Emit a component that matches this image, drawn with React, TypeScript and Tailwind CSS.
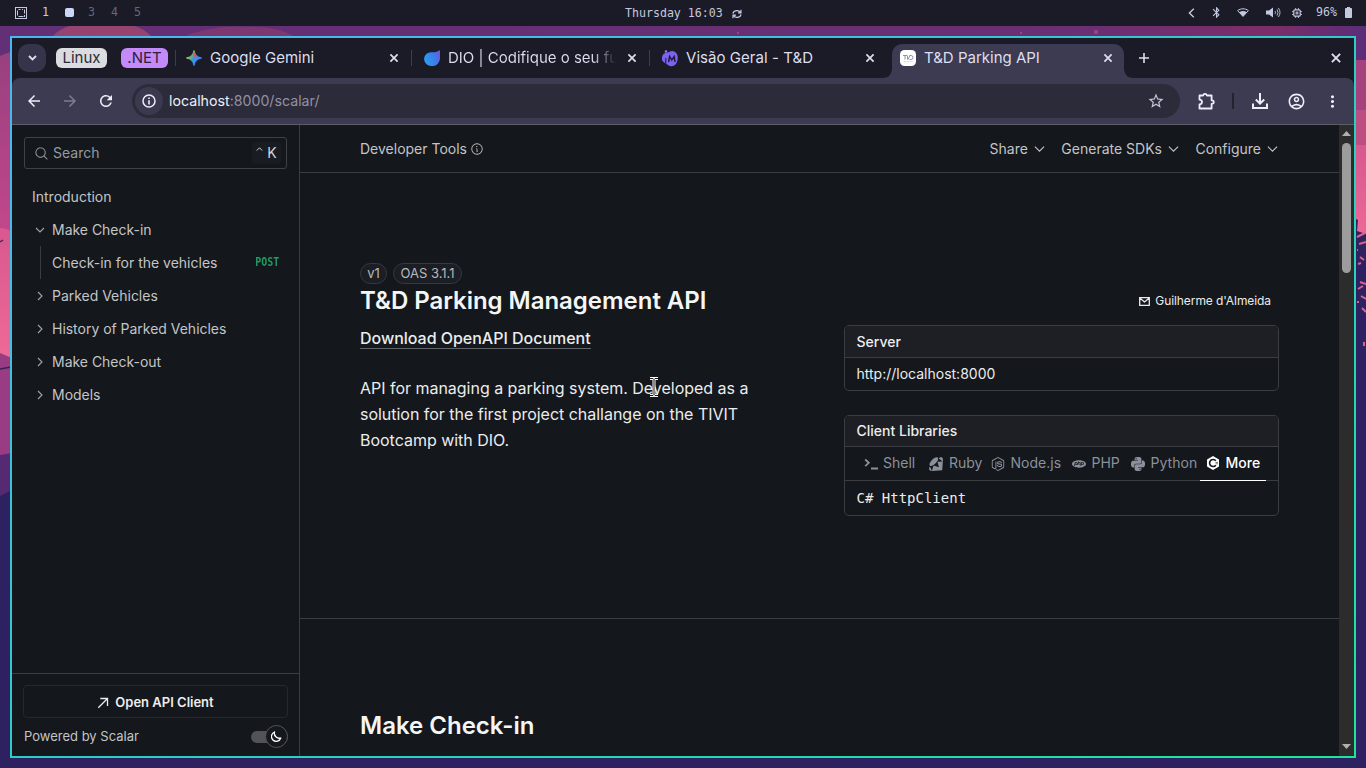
import type { ReactNode } from "react";
import {
  MdArrowBack,
  MdArrowForward,
  MdRefresh,
  MdStarBorder,
  MdMoreVert,
  MdBluetooth,
  MdOutlineAccountCircle,
} from "react-icons/md";
import { PiMagnifyingGlass, PiInfo } from "react-icons/pi";
import { SiNodedotjs, SiPhp, SiPython, SiRuby } from "react-icons/si";

function Wallpaper() {
  return (
    <svg className="absolute inset-0 h-full w-full" viewBox="0 0 1366 768" preserveAspectRatio="none">
      <defs>
        <linearGradient id="wl" x1="0" y1="0" x2="0" y2="1">
          <stop offset="0" stopColor="#98407f" />
          <stop offset="0.45" stopColor="#c4478c" />
          <stop offset="1" stopColor="#d04a8a" />
        </linearGradient>
        <linearGradient id="wp" x1="0" y1="0" x2="0" y2="1">
          <stop offset="0" stopColor="#d8588f" />
          <stop offset="1" stopColor="#ee6a97" />
        </linearGradient>
        <linearGradient id="wt" x1="0" y1="0" x2="1" y2="0">
          <stop offset="0" stopColor="#632f76" />
          <stop offset="0.8" stopColor="#6b2f73" />
          <stop offset="0.93" stopColor="#7d2d69" />
          <stop offset="1" stopColor="#5b2d79" />
        </linearGradient>
      </defs>
      <rect width="1366" height="768" fill="#2d2161" />
      <rect y="26" width="1366" height="34" fill="url(#wt)" />
      <ellipse cx="102" cy="42" rx="51" ry="21" fill="#96436f" />
      <path d="M175 40Q210 24 250 27Q285 27 298 40Z" fill="#7d3872" />
      <circle cx="1021" cy="33" r="1" fill="#bd4386" />
      <circle cx="1096" cy="32" r="2" fill="#a74086" />
      <circle cx="738" cy="33" r="1" fill="#bd4386" />
      <path d="M0 56L10 52V470H0Z" fill="url(#wl)" />
      <path d="M0 228Q6 228 12 232V362L0 354Z" fill="url(#wp)" />
      <path d="M0 353L12 358V456H0Z" fill="#993c83" />
      <path d="M0 242L3 240M0 369L11 367" stroke="#392451" strokeWidth="1.3" />
      <path d="M0 455L12 453V490L0 496Z" fill="#552a73" />
      <rect x="1356" y="60" width="10" height="50" fill="#a5427e" />
      <rect x="1356" y="110" width="10" height="36" fill="#bd4e82" />
      <rect x="1356" y="145" width="10" height="100" fill="url(#wp)" />
      <path d="M1356 219L1358 220L1357 231L1366 234V260H1356Z" fill="#30215f" />
      <path
        d="M1357 237L1365 233M1359 244L1366 242M1357 250H1358M1360 257L1364 260M1358 264L1361 263M1360 282L1366 284M1358 289L1363 286M1361 296L1366 299M1357 302H1359M1362 308L1366 312M1364 342V346"
        stroke="#d9618f"
        strokeWidth="2"
      />
    </svg>
  );
}

function StatusBar() {
  return (
    <div className="relative flex h-[26px] shrink-0 items-center justify-between bg-[#1b1b28] font-['DejaVu_Sans_Mono',monospace] text-[11.6px] text-[#c3c9df]">
      <div className="flex items-center pl-[15px]">
        <svg className="h-3 w-3" viewBox="0 0 12 12" fill="none" stroke="currentColor">
          <rect x=".5" y=".5" width="11" height="11" />
          <path d="M3.5 2.5h2M2.5 3.5v5M9.5 2.5v4M3.5 9.5h5M7 2.5h1M9.5 8v2" />
        </svg>
        <span className="ml-[15px] w-[7px]">1</span>
        <span className="ml-[16px] h-[9px] w-[9px] rounded-[2px] bg-[#cdd6f4]" />
        <span className="ml-[14px] w-[7px] text-[#656879]">3</span>
        <span className="ml-4 w-[7px] text-[#656879]">4</span>
        <span className="ml-4 w-[7px] text-[#656879]">5</span>
      </div>
      <div className="absolute top-[5px] left-[625px] flex items-center">
        <span>Thursday 16:03</span>
        <svg className="ml-[9px] h-[10px] w-[10px]" viewBox="0 0 10 10" fill="none" stroke="currentColor" strokeWidth="1.2">
          <path d="M1 4.6C1.6 1 6.8.6 8.4 3.4M9 5.4C8.4 9 3.2 9.4 1.6 6.6M9 .8V3.8H6M1 9.2V6.2H4" />
        </svg>
      </div>
      <div className="flex items-center pr-[14px]">
        <svg className="h-[10px] w-[7px]" viewBox="0 0 7 10" fill="none" stroke="currentColor" strokeWidth="1.4">
          <path d="M5.8.8L1.4 5l4.4 4.2" />
        </svg>
        <MdBluetooth className="ml-[15px] h-[13px] w-[13px]" />
        <svg className="ml-[14px] h-[9px] w-3" viewBox="0 0 12 9">
          <path d="M.6 2.6C3.5.2 8.5.2 11.4 2.6L6 8.4Z" fill="none" stroke="currentColor" />
          <path d="M2.2 4.2C4.5 2.6 7.5 2.6 9.8 4.2L6 8.4Z" fill="currentColor" />
        </svg>
        <svg className="ml-[17px] h-[11px] w-[15px]" viewBox="0 0 15 11">
          <path d="M0 3.5h3L7 .5v10l-4-3H0Z" fill="currentColor" />
          <path d="M9 4q1 1.5 0 3M11 2.5q2 3 0 6M12.4 1q3.2 4.5 0 9" fill="none" stroke="currentColor" strokeWidth=".9" />
        </svg>
        <svg className="ml-[11px] h-[10px] w-[10px]" viewBox="0 0 11 11" fill="none" stroke="currentColor">
          <rect x="2" y="2" width="7" height="7" rx="1" strokeWidth="1.3" />
          <rect x="4.5" y="4.5" width="2" height="2" />
          <path d="M4 0v2M7 0v2M4 9v2M7 9v2M0 4h2M0 7h2M9 4h2M9 7h2" />
        </svg>
        <span className="ml-[14px] w-[21px]">96%</span>
        <svg className="ml-[8px] h-[11px] w-[7px]" viewBox="0 0 7 11">
          <path d="M2 0h3v1h1.2q.8 0 .8.8v8.4q0 .8-.8.8H.8Q0 11 0 10.2V1.8Q0 1 .8 1H2Z" fill="currentColor" />
        </svg>
      </div>
    </div>
  );
}

function CloseIcon({ className }: { className: string }) {
  return (
    <svg className={className} viewBox="0 0 14 14" fill="none" stroke="currentColor" strokeWidth="1.7">
      <path d="M3.4 3.4L10.6 10.6M10.6 3.4L3.4 10.6" />
    </svg>
  );
}

function GeminiIcon() {
  return (
    <svg className="h-4 w-4 shrink-0" viewBox="0 0 16 16">
      <defs>
        <linearGradient id="gem" x1="0.1" y1="0.2" x2="0.9" y2="0.75">
          <stop offset="0" stopColor="#f6c12c" />
          <stop offset="0.25" stopColor="#6fbf63" />
          <stop offset="0.5" stopColor="#3c8ff5" />
          <stop offset="1" stopColor="#3d86f7" />
        </linearGradient>
      </defs>
      <path d="M8 .5Q9.2 6.8 15.5 8Q9.2 9.2 8 15.5Q6.8 9.2 .5 8Q6.8 6.8 8 .5Z" fill="url(#gem)" stroke="url(#gem)" strokeWidth="1" />
      <path d="M8 .5Q9.2 6.8 12 7.3L7.2 6.2Q7.8 3 8 .5Z" fill="#ee4d4f" />
      <path d="M8 15.5Q6.9 10 4.5 8.8L8 10Z" fill="#36b46a" />
    </svg>
  );
}

function DioIcon() {
  return (
    <svg className="h-4 w-4 shrink-0" viewBox="0 0 16 16">
      <defs>
        <linearGradient id="dio" x1="0" y1="0.5" x2="1" y2="0.2">
          <stop offset="0" stopColor="#2b9cf0" />
          <stop offset="0.6" stopColor="#3a7eea" />
          <stop offset="1" stopColor="#6b55e0" />
        </linearGradient>
      </defs>
      <path d="M16 0V8.5A7.5 7.5 0 0 1 8 16A7.6 7.6 0 0 1 0 9A7 7 0 0 1 7.5 2.2Q10 2.6 12.5 1.7Q14.5 1 16 0Z" fill="url(#dio)" />
    </svg>
  );
}

function VisaoIcon() {
  return (
    <svg className="h-[17px] w-4 shrink-0" viewBox="0 0 16 17">
      <path d="M7 2Q12-1 15 4Q17 9 14 14Q10 18 6 15L3 13Q-1 11 0 7Q1 3 4 3Z" fill="#7b62f1" />
      <path d="M3.8 8V13.5" stroke="#1a1b26" strokeWidth="1" />
      <circle cx="4" cy="1.5" r="1.3" fill="#8f79f5" />
      <path d="M6.6 12L7.6 6.5L9.8 10L12.2 6.5L13 12" fill="none" stroke="#1d1a32" strokeWidth="1.4" />
    </svg>
  );
}

function PuzzleIcon() {
  return (
    <svg className="h-[17px] w-[17px]" viewBox="0 0 17 17" fill="none" stroke="currentColor" strokeWidth="1.8" strokeLinejoin="round">
      <path d="M1.5 2.5H5.2Q5.4.9 7 .9T8.8 2.500H13.600V7.300Q15.800 7.400 15.800 9.100T13.600 10.900V15.500H1.500V11.400Q4 11.200 4 9T1.500 6.600Z" />
    </svg>
  );
}

function Tab({ icon, title, fade }: { icon: ReactNode; title: string; fade?: boolean }) {
  return (
    <div className="flex w-[238px] items-center">
      {icon}
      <span
        className={
          fade
            ? "ml-2 w-[168px] whitespace-nowrap bg-linear-to-r from-[#dcdff0] from-86% to-transparent bg-clip-text text-transparent"
            : "ml-2 w-[168px] whitespace-nowrap"
        }
      >
        {title}
      </span>
      <CloseIcon className="ml-[9px] h-[14px] w-[14px] shrink-0" />
      <span className="ml-[10px] h-4 w-px bg-[#3d3d4d]" />
    </div>
  );
}

function TabStrip() {
  return (
    <div className="flex h-10 shrink-0 items-center bg-[#1a1b26] text-[15px] text-[#dcdff0]">
      <div className="ml-1.5 flex h-7 w-7 items-center justify-center rounded-[10px] bg-[#35344a]">
        <svg className="h-[6px] w-[9px]" viewBox="0 0 9 6" fill="none" stroke="currentColor" strokeWidth="1.8">
          <path d="M1 1L4.5 4.500L8 1" />
        </svg>
      </div>
      <div className="ml-[10px] flex h-5 w-[51px] items-center justify-center rounded-[6px] bg-[#dadce0] text-[#2b2c36]">Linux</div>
      <div className="ml-[14px] flex h-5 w-[47px] items-center justify-center rounded-[6px] bg-[#c58af9] text-[#2b2040]">.NET</div>
      <span className="ml-[7px] h-4 w-px bg-[#3d3d4d]" />
      <div className="ml-[10px] flex h-full">
        <Tab icon={<GeminiIcon />} title="Google Gemini" />
        <Tab icon={<DioIcon />} title="DIO | Codifique o seu fu" fade />
        <div className="flex w-[230px] items-center">
          <VisaoIcon />
          <span className="ml-2 w-[168px] tracking-[0.05px]">Visão Geral - T&amp;D</span>
          <CloseIcon className="ml-[9px] h-[14px] w-[14px] shrink-0" />
        </div>
      </div>
      <div className="flex h-full items-end">
        <svg className="-ml-[10px] h-[10px] w-[10px]" viewBox="0 0 10 10">
          <path d="M10 0V10H0Q10 10 10 0Z" fill="#3c3b52" />
        </svg>
        <div className="flex h-[34px] w-[232px] items-center rounded-t-[10px] bg-[#3c3b52] pb-1.5 pl-2">
          <svg className="h-4 w-4" viewBox="0 0 16 16">
            <rect width="16" height="16" rx="4.5" fill="#fff" />
            <path d="M3 5.500H7M5 5.500V9.500M7.500 5.500V9.500M8 9.500L10 5.500M9.500 5.500H11Q13 5.500 13 7.500T11 9.500H9.500" fill="none" stroke="#85879a" strokeWidth=".9" />
            <path d="M3.500 11.500H12.500" stroke="#d4d4dc" strokeWidth=".7" />
          </svg>
          <span className="ml-2 w-[168px]">T&amp;D Parking API</span>
          <CloseIcon className="ml-[9px] h-[14px] w-[14px]" />
        </div>
        <svg className="h-[10px] w-[10px]" viewBox="0 0 10 10">
          <path d="M0 0V10H10Q0 10 0 0Z" fill="#3c3b52" />
        </svg>
      </div>
      <svg className="ml-[5px] h-[10px] w-[10px]" viewBox="0 0 10 10" fill="none" stroke="currentColor" strokeWidth="1.6">
        <path d="M5 0V10M0 5H10" />
      </svg>
      <CloseIcon className="mr-[10px] ml-auto h-4 w-4" />
    </div>
  );
}

function Toolbar() {
  return (
    <div className="bg-[#1a1b26]">
      <div className="flex h-[46px] shrink-0 items-center rounded-t-[8px] bg-[#3c3b52] text-[#eceefa]">
        <MdArrowBack className="ml-[13px] h-[18px] w-[18px]" />
        <MdArrowForward className="ml-[18px] h-[18px] w-[18px] text-[#7d7c92]" />
        <MdRefresh className="ml-[18px] h-[18px] w-[18px]" />
        <div className="ml-[17px] flex h-[34px] w-[1048px] items-center rounded-full bg-[#2c2b3a] pl-[3px]">
          <div className="flex h-7 w-7 items-center justify-center rounded-full bg-[#3a394f]">
            <svg className="h-[14px] w-[14px]" viewBox="0 0 14 14">
              <circle cx="7" cy="7" r="6" fill="none" stroke="currentColor" strokeWidth="1.5" />
              <path d="M6.200 6.200H7.800V10.400H6.200ZM6.200 3.500H7.800V5.100H6.200Z" fill="currentColor" />
            </svg>
          </div>
          <div className="ml-1.5 text-[14.2px] text-[#9291a3]">
            <span className="text-[#eceefa]">localhost</span>:8000/scalar/
          </div>
          <MdStarBorder className="mr-[15px] ml-auto h-[18px] w-[18px] text-[#c6c5d6]" />
        </div>
        <span className="ml-[18px]">
          <PuzzleIcon />
        </span>
        <span className="ml-[17px] h-4 w-[2px] bg-[#232231]" />
        <svg className="ml-[18px] h-4 w-4" viewBox="0 0 16 16" fill="none" stroke="currentColor" strokeWidth="2">
          <path d="M8 0V10M3.800 6.500L8 10.700L12.200 6.500M1 10.500V15H15V10.500" />
        </svg>
        <MdOutlineAccountCircle className="ml-[19px] h-[19px] w-[19px]" />
        <MdMoreVert className="ml-[17px] h-[19px] w-[19px]" />
      </div>
    </div>
  );
}

function NavGroup({ label, open }: { label: string; open?: boolean }) {
  return (
    <div className="flex h-[33px] items-center pl-[22px]">
      <svg className="h-3 w-3 text-[#a3a5a9]" viewBox="0 0 12 12" fill="none" stroke="currentColor" strokeWidth="1.1">
        <path d={open ? "M2 4L6 8L10 4" : "M4 2L8 6L4 10"} />
      </svg>
      <span className="ml-1.5 tracking-[-0.02px]">{label}</span>
    </div>
  );
}

function Sidebar() {
  return (
    <aside className="flex w-[288px] shrink-0 flex-col border-r border-[#3a3d41] text-[14px] text-[#c3c5c8]">
      <div className="mt-3 ml-3 flex h-8 w-[263px] items-center rounded-[3px] border border-[#3e4145] pl-[9px] text-[#979a9f]">
        <PiMagnifyingGlass className="h-[15px] w-[15px]" />
        <span className="ml-1 pb-px text-[14px]">Search</span>
        <div className="mr-[5px] ml-auto flex h-[22px] w-[29px] items-center justify-center gap-1 rounded-[3px] bg-[#191c23] pb-px text-[#d3d5d8]">
          <svg className="mb-2 h-1 w-[7px]" viewBox="0 0 7 4" fill="none" stroke="currentColor">
            <path d="M.8 3.500L3.500.8L6.200 3.500" />
          </svg>
          <span>K</span>
        </div>
      </div>
      <nav className="mt-[11px]">
        <div className="flex h-[33px] items-center pl-5">Introduction</div>
        <NavGroup label="Make Check-in" open />
        <div className="ml-7 flex h-[33px] items-center border-l border-[#3a3d41] pr-5 pl-[11px]">
          <span>Check-in for the vehicles</span>
          <span className="ml-auto origin-right scale-x-[0.85] font-['DejaVu_Sans_Mono',monospace] text-[11.7px] font-bold text-[#219a65]">POST</span>
        </div>
        <NavGroup label="Parked Vehicles" />
        <NavGroup label="History of Parked Vehicles" />
        <NavGroup label="Make Check-out" />
        <NavGroup label="Models" />
      </nav>
      <div className="mt-auto h-[83px] border-t border-[#3a3d41] pt-[11px]">
        <div className="ml-[11px] flex h-[33px] w-[265px] items-center justify-center rounded-[4px] border border-[#25282d] pt-[2px] text-[13px] font-semibold text-[#eceded]">
          <svg className="mr-1.5 h-3 w-3" viewBox="0 0 12 12" fill="none" stroke="currentColor" strokeWidth="1.3">
            <path d="M1.300 10.700L10.500 1.500M3.300 1.500H10.500V9" />
          </svg>
          Open API Client
        </div>
        <div className="mt-[7px] flex h-[23px] items-center pr-[11px] pl-3 text-[13px]">
          <span>Powered by Scalar</span>
          <div className="ml-auto flex h-3 w-[37px] items-center justify-end rounded-full bg-[#515359]">
            <div className="flex h-[23px] w-[23px] shrink-0 items-center justify-center rounded-full border border-[#54565b] bg-[#15181d] text-white">
              <svg className="h-[11px] w-[11px]" viewBox="0 0 11 11" fill="none" stroke="currentColor" strokeWidth="1.3" strokeLinejoin="round">
                <path d="M3.500 1A4.800 4.800 0 1 0 9.800 7A5 5 0 0 1 3.500 1Z" />
              </svg>
            </div>
          </div>
        </div>
      </div>
    </aside>
  );
}

function MenuItem({ label }: { label: string }) {
  return (
    <div className="flex items-center gap-1.5">
      <span>{label}</span>
      <svg className="h-[6px] w-[11px]" viewBox="0 0 11 6" fill="none" stroke="currentColor" strokeWidth="1.1">
        <path d="M.9.7L5.500 5.200L10.100.7" />
      </svg>
    </div>
  );
}

function CSharpIcon() {
  return (
    <svg className="h-[14px] w-[14px]" viewBox="0 0 14 14">
      <path d="M7 0L13 3.500V10.500L7 14L1 10.500V3.500Z" fill="currentColor" />
      <path d="M9.800 4.800A3.500 3.500 0 1 0 9.800 9.200" fill="none" stroke="#14171b" strokeWidth="1.6" />
      <path d="M9.500 6.400H12M9.500 7.800H12" stroke="#14171b" strokeWidth=".6" />
    </svg>
  );
}

function Content() {
  return (
    <main className="flex min-w-0 flex-1 flex-col overflow-hidden text-[#ebeced]">
      <div className="flex h-12 shrink-0 items-center border-b border-[#3a3d41] pr-[61px] pl-[60px] text-[14px] text-[#c3c5c8]">
        <span>Developer Tools</span>
        <PiInfo className="ml-[3px] h-[14px] w-[14px]" />
        <div className="ml-auto flex gap-[16.5px]">
          <MenuItem label="Share" />
          <MenuItem label="Generate SDKs" />
          <MenuItem label="Configure" />
        </div>
      </div>
      <section className="flex h-[446px] shrink-0 justify-between border-b border-[#3a3d41] pt-[90px] pr-[60px] pl-[60px]">
        <div className="w-[400px]">
          <div className="flex gap-1.5 text-[13px] text-[#b7b9bd]">
            <span className="flex h-[21px] w-[27px] items-center justify-center rounded-full border border-[#36393f] bg-[#1b1e24] pt-px">v1</span>
            <span className="flex h-[21px] w-[69px] items-center justify-center rounded-full border border-[#36393f] bg-[#1b1e24] pt-px">OAS 3.1.1</span>
          </div>
          <h1 className="mt-[2px] text-[24px] leading-[30px] font-semibold tracking-[-0.03px] whitespace-nowrap text-[#f4f5f5]">T&amp;D Parking Management API</h1>
          <div className="mt-3 flex">
            <span className="border-b border-[#62666b] text-[16px] leading-5 font-medium tracking-[-0.02px] whitespace-nowrap">Download OpenAPI Document</span>
          </div>
          <p className="mt-[26px] text-[16px] leading-[26px] tracking-[-0.02px]">
            API for managing a parking system. Developed as a solution for the first project challange on the TIVIT Bootcamp with DIO.
          </p>
        </div>
        <div className="w-[435px]">
          <div className="mt-[29px] flex h-[18px] items-center justify-end gap-[5px] pr-2 text-[12px] tracking-[-0.08px]">
            <svg className="h-[9px] w-[11px]" viewBox="0 0 11 9" fill="none" stroke="currentColor" strokeWidth="1.3">
              <path d="M.7.7H10.300V8.300H.7ZM1 1.200L5.500 5L10 1.200" />
            </svg>
            Guilherme d'Almeida
          </div>
          <div className="mt-[15px] h-[66px] overflow-hidden rounded-[5px] border border-[#3a3d41] text-[14px]">
            <div className="flex h-8 items-center border-b border-[#3a3d41] bg-[#1e1f24] pl-[11.5px] font-medium">Server</div>
            <div className="flex h-8 items-center pb-[2px] pl-[11.5px]">http://localhost:8000</div>
          </div>
          <div className="mt-6 h-[101px] overflow-hidden rounded-[5px] border border-[#3a3d41] text-[14px]">
            <div className="flex h-[31px] items-center border-b border-[#3a3d41] bg-[#1e1f24] pb-[2px] pl-[11.5px] font-medium">Client Libraries</div>
            <div className="flex h-[34px] items-center border-b border-[#3a3d41] pl-[19px] text-[14px] text-[#8b919c]">
              <svg className="h-[14px] w-[14px]" viewBox="0 0 14 14" fill="none" stroke="currentColor" strokeWidth="1.8">
                <path d="M1.200 2.500L4.800 5.800L1.200 9.100M7 11.500H14" />
              </svg>
              <span className="ml-[5px] w-[33px] pb-[2px]">Shell</span>
              <SiRuby className="ml-[13px] h-[14px] w-[14px]" />
              <span className="ml-1.5 w-[33px] pb-[2px]">Ruby</span>
              <SiNodedotjs className="ml-[9px] h-[14px] w-[14px]" />
              <span className="ml-[5.5px] w-[50.5px] pb-[2px] tracking-[0.03px]">Node.js</span>
              <SiPhp className="ml-[11px] h-[14px] w-[14px]" />
              <span className="ml-[5.5px] w-[27.5px] pb-[2px]">PHP</span>
              <SiPython className="ml-[12px] h-[14px] w-[14px]" />
              <span className="ml-[5.5px] w-[46.5px] pb-[2px] tracking-[0.05px]">Python</span>
              <div className="ml-[3px] flex h-[34px] w-[66px] items-center border-b border-white pl-[6px] font-medium text-white">
                <CSharpIcon />
                <span className="ml-[5.5px] pb-px">More</span>
              </div>
            </div>
            <div className="flex h-[34px] items-center pl-[11.5px] font-['DejaVu_Sans_Mono',monospace] text-[14px]">C# HttpClient</div>
          </div>
        </div>
      </section>
      <h2 className="mt-[92px] ml-[60px] text-[24px] leading-[30px] font-semibold text-[#f4f5f5]">Make Check-in</h2>
    </main>
  );
}

function Scrollbar() {
  return (
    <div className="flex w-[15px] shrink-0 flex-col items-center bg-[#2b2c2b]">
      <svg className="mt-[6px] h-[5px] w-[9px]" viewBox="0 0 9 5">
        <path d="M0 5L4.500 0L9 5Z" fill="#b0b1af" />
      </svg>
      <div className="mt-[7px] h-[130px] w-[9px] rounded-full bg-[#9b9c9b]" />
      <svg className="mt-auto mb-[7px] h-[5px] w-[9px]" viewBox="0 0 9 5">
        <path d="M0 0L4.500 5L9 0Z" fill="#b0b1af" />
      </svg>
    </div>
  );
}

function TextCursor() {
  return (
    <svg className="absolute top-[377px] left-[649px] h-5 w-[10px]" viewBox="0 0 10 20">
      <path d="M1 1.500H4L5 2.500L6 1.500H9M5 2.500V17.500M1 18.500H4L5 17.500L6 18.500H9" fill="none" stroke="#fff" strokeWidth="3" />
      <path d="M1 1.500H4L5 2.500L6 1.500H9M5 2.500V17.500M1 18.500H4L5 17.500L6 18.500H9" fill="none" stroke="#15181c" strokeWidth="1" />
    </svg>
  );
}

export default function App() {
  return (
    <div className="relative flex h-[768px] w-[1366px] flex-col overflow-hidden font-['Inter',sans-serif]">
      <Wallpaper />
      <StatusBar />
      <div className="relative mx-[10px] mt-[10px] mb-[10px] flex min-h-0 flex-1 bg-linear-to-br from-[#4bb6ef] via-[#30cbc8] to-[#1de596] p-[2px]">
        <div className="flex min-w-0 flex-1 flex-col bg-[#14171b]">
          <TabStrip />
          <Toolbar />
          <div className="flex min-h-0 flex-1 border-t border-[#5c5d68]">
            <Sidebar />
            <Content />
            <Scrollbar />
          </div>
        </div>
      </div>
      <TextCursor />
    </div>
  );
}
